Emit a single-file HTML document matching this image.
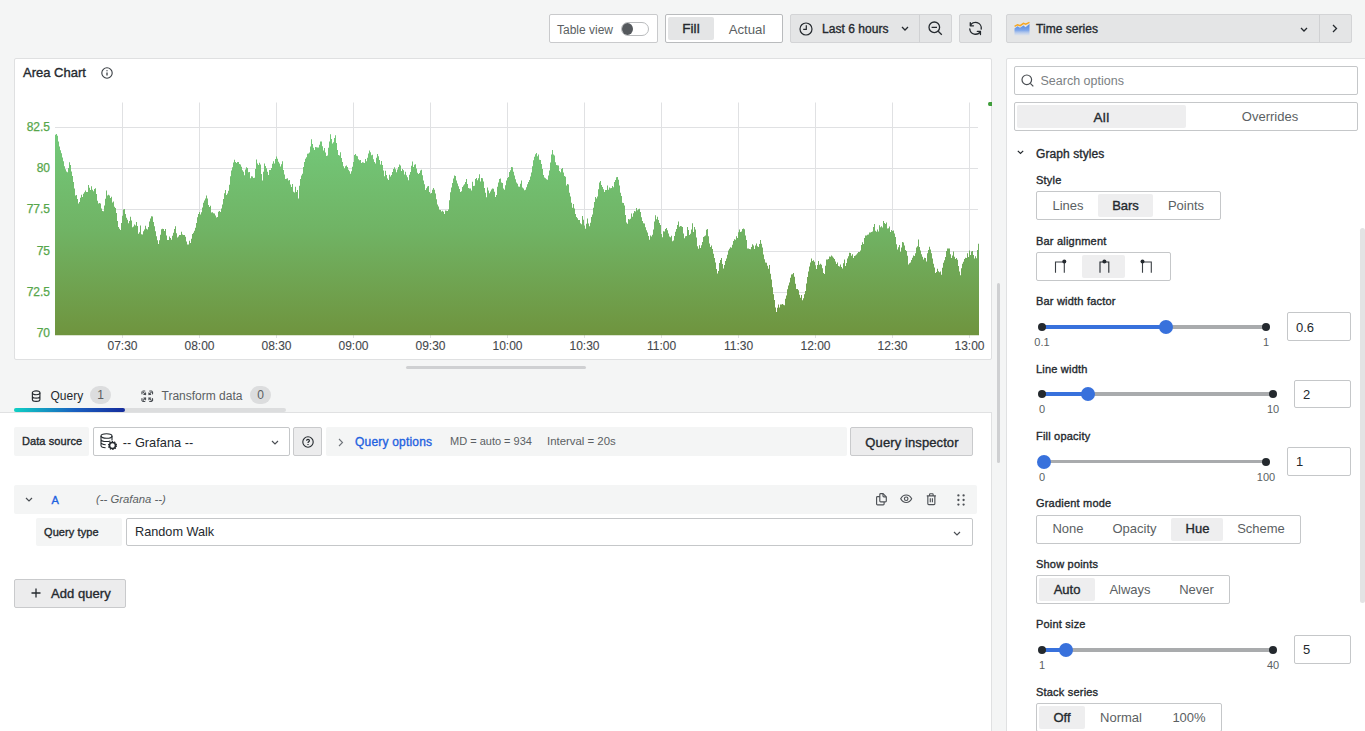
<!DOCTYPE html>
<html lang="en">
<head>
<meta charset="utf-8">
<title>Area Chart - Edit panel</title>
<style>
*{box-sizing:border-box;margin:0;padding:0}
html,body{width:1365px;height:731px;overflow:hidden}
body{background:#f4f5f5;font-family:"Liberation Sans",sans-serif;font-size:12.5px;color:#24292e;position:relative}
.abs{position:absolute}
.t{position:absolute;white-space:nowrap;line-height:1}
.c{transform:translateX(-50%)}
.btn{position:absolute;background:#e4e5e6;border:1px solid #d3d4d6;border-radius:2px}
.box{position:absolute;background:#fff;border:1px solid #c5c7c9;border-radius:2px}
.act{position:absolute;background:#eeeeef;border-radius:2px}
.lbl{position:absolute;white-space:nowrap;line-height:1;font-size:11px;letter-spacing:.2px;-webkit-text-stroke:.35px currentColor;color:#24292e}
.md{-webkit-text-stroke:.35px currentColor}
.sec{color:#5b5f63}
.track{position:absolute;height:3.5px;background:#a9abad;border-radius:2px}
.fill{position:absolute;height:3.5px;background:#3871dc;border-radius:2px}
.dot{position:absolute;width:8px;height:8px;border-radius:50%;background:#24292e}
.hnd{position:absolute;width:14px;height:14px;border-radius:50%;background:#3871dc}
.mk{position:absolute;white-space:nowrap;line-height:1;font-size:11px;color:#5b5f63;transform:translateX(-50%)}
svg{position:absolute;overflow:visible}
</style>
</head>
<body>

<!-- ===== top toolbar ===== -->
<div class="box" style="left:549px;top:14px;width:109px;height:29px;border-color:#c9cacc"></div>
<div class="t sec" style="left:557px;top:23.5px;font-size:12px">Table view</div>
<div class="abs" style="left:621px;top:22px;width:28px;height:14px;border-radius:7px;background:#fff;border:1px solid #b9bbbd"></div>
<div class="abs" style="left:622px;top:23px;width:11px;height:12px;border-radius:50%;background:#55595d"></div>

<div class="box" style="left:665px;top:14px;width:118px;height:29px;border-color:#b9bbbd"></div>
<div class="act" style="left:668px;top:17px;width:46px;height:23px;background:#e4e5e6"></div>
<div class="t c md" style="left:691px;top:21.5px;font-size:13.5px;letter-spacing:.1px">Fill</div>
<div class="t c sec" style="left:747px;top:22.5px;font-size:13.2px">Actual</div>

<div class="btn" style="left:790px;top:14px;width:162px;height:29px"></div>
<div class="abs" style="left:919px;top:15px;width:1px;height:27px;background:#d0d1d3"></div>
<svg style="left:799px;top:22px" width="14" height="14" viewBox="0 0 14 14" fill="none" stroke="#24292e" stroke-width="1.2"><circle cx="7" cy="7" r="6"/><path d="M7.3 3.2V7.3H4.2"/></svg>
<div class="t md" style="left:822px;top:23px;font-size:12px;letter-spacing:.05px">Last 6 hours</div>
<svg style="left:901px;top:26px" width="8" height="6" viewBox="0 0 8 6" fill="none" stroke="#24292e" stroke-width="1.3"><path d="M1 1l3 3 3-3"/></svg>
<svg style="left:928px;top:21px" width="15" height="15" viewBox="0 0 15 15" fill="none" stroke="#24292e" stroke-width="1.3"><circle cx="6.3" cy="6.3" r="5.3"/><path d="M3.6 6.3h5.4M10.2 10.2l3.6 3.6"/></svg>

<div class="btn" style="left:959px;top:14px;width:33px;height:29px"></div>
<svg style="left:967.5px;top:21.3px" width="15" height="15" viewBox="0 0 17 17" fill="none" stroke="#24292e" stroke-width="1.500" stroke-linecap="round" stroke-linejoin="round"><path d="M2.600 5.500A6.500 6.500 0 0 1 14.980 9.070M2.600 1.900V5.500H6.200"/><path d="M2.030 9.070A6.500 6.500 0 0 0 14.100 11.800M10.600 11.800H14.100V15.400"/></svg>

<div class="btn" style="left:1006px;top:14px;width:346px;height:29px"></div>
<div class="abs" style="left:1319px;top:15px;width:1px;height:27px;background:#d0d1d3"></div>
<svg style="left:1013.5px;top:21.5px" width="16" height="13.5" viewBox="0 0 16 13.5"><defs><linearGradient id="tsg" x1="0" y1="0" x2="0" y2="1"><stop offset="0" stop-color="#4f86e0"/><stop offset=".55" stop-color="#7ea6ea"/><stop offset="1" stop-color="#c9d8f3" stop-opacity=".3"/></linearGradient></defs><path d="M.5 13.500V6.500l3-2.300 2.500 1.500 3.500-2.200 2 1.700 4-3.200v11.500z" fill="url(#tsg)"/><path d="M.6 4.300l2.900-1.600 2.700.9L9.500 1.300l2.200.8L15.500.4" fill="none" stroke="#f5a623" stroke-width="1.500"/></svg>
<div class="t md" style="left:1036px;top:23px;font-size:12px;letter-spacing:.05px">Time series</div>
<svg style="left:1300.3px;top:26.5px" width="8" height="6" viewBox="0 0 8 6" fill="none" stroke="#24292e" stroke-width="1.3"><path d="M1 1l3 3 3-3"/></svg>
<svg style="left:1332px;top:24px" width="6" height="9" viewBox="0 0 6 9" fill="none" stroke="#24292e" stroke-width="1.3"><path d="M1 1l3.5 3.5L1 8"/></svg>

<!-- ===== chart panel ===== -->
<div class="abs" style="left:14px;top:58px;width:978px;height:302px;background:#fff;border:1px solid #dfe0e1;border-radius:2px"></div>
<div class="t md" style="left:23px;top:66.2px;font-size:13px">Area Chart</div>
<svg style="left:101px;top:67px" width="12" height="12" viewBox="0 0 12 12" fill="none" stroke="#3a3f44" stroke-width="1.1"><circle cx="6" cy="6" r="5.2"/><path d="M6 5.4v3.2M6 3.2v1" stroke-width="1.3"/></svg>
<svg style="left:0;top:0" width="1000" height="360" viewBox="0 0 1000 360" font-family="Liberation Sans, sans-serif" font-size="12">
<defs><linearGradient id="hue" x1="0" y1="128" x2="0" y2="335" gradientUnits="userSpaceOnUse"><stop offset="0" stop-color="#73ca7b"/><stop offset=".5" stop-color="#70b364"/><stop offset="1" stop-color="#6f943e"/></linearGradient></defs>
<g stroke="#e0e1e3" stroke-width="1"><path d="M122.5 102.5V338"/><path d="M199.5 102.5V338"/><path d="M276.5 102.5V338"/><path d="M353.5 102.5V338"/><path d="M430.5 102.5V338"/><path d="M507.5 102.5V338"/><path d="M584.5 102.5V338"/><path d="M661.5 102.5V338"/><path d="M738.5 102.5V338"/><path d="M815.5 102.5V338"/><path d="M892.5 102.5V338"/><path d="M969.5 102.5V338"/><path d="M55 127.5H978"/><path d="M55 168.5H978"/><path d="M55 209.5H978"/><path d="M55 251.5H978"/><path d="M55 292.5H978"/><path d="M55 333.5H978"/></g>
<path d="M55 335.3V134.8h1V133.9h1V135.7h1V141.4h1V146.6h1V150.3h1V153.2h1V157.6h1V161.2h1V166.3h1V169.2h1V171.5h1V172.2h1V167.9h1V162.3h1V165.0h1V171.6h1V176.0h1V182.1h1V188.4h1V195.6h1V195.0h1V198.9h1V203.5h1V201.9h1V197.7h1V194.8h1V197.1h1V193.7h1V192.2h1V190.4h1V191.9h1V191.9h1V185.1h1V187.7h1V190.0h1V186.2h1V189.8h1V191.3h1V188.9h1V188.3h1V194.0h1V200.7h1V203.6h1V203.0h1V203.4h1V208.5h1V211.1h1V211.2h1V205.4h1V198.8h1V190.6h1V195.5h1V194.7h1V195.6h1V197.9h1V196.8h1V202.6h1V201.5h1V206.8h1V208.0h1V213.0h1V220.9h1V226.9h1V228.8h1V230.1h1V222.9h1V215.7h1V209.4h1V209.1h1V214.0h1V217.7h1V219.8h1V223.3h1V221.0h1V216.8h1V220.5h1V227.2h1V226.4h1V224.6h1V225.5h1V222.0h1V225.9h1V233.7h1V232.3h1V225.6h1V234.2h1V234.4h1V231.3h1V229.4h1V225.7h1V228.7h1V229.5h1V227.0h1V221.6h1V218.6h1V216.3h1V216.6h1V222.1h1V226.2h1V231.2h1V236.3h1V240.3h1V244.1h1V240.3h1V234.7h1V229.3h1V228.8h1V229.0h1V230.9h1V229.1h1V235.6h1V240.0h1V240.0h1V236.4h1V238.1h1V239.8h1V235.8h1V232.8h1V229.1h1V226.3h1V233.2h1V237.6h1V236.4h1V235.0h1V235.1h1V231.8h1V234.6h1V235.1h1V234.9h1V236.7h1V241.5h1V244.6h1V244.4h1V240.8h1V243.1h1V238.8h1V233.9h1V232.8h1V230.7h1V227.7h1V223.0h1V217.3h1V214.0h1V212.1h1V214.6h1V212.3h1V207.4h1V202.8h1V200.6h1V198.5h1V195.5h1V198.6h1V205.0h1V207.1h1V205.7h1V212.6h1V212.3h1V213.2h1V213.6h1V215.6h1V217.5h1V217.0h1V211.8h1V211.0h1V211.9h1V208.5h1V204.6h1V199.1h1V193.2h1V189.9h1V195.1h1V193.6h1V190.7h1V184.7h1V176.3h1V170.4h1V167.2h1V162.5h1V159.8h1V161.9h1V163.0h1V162.1h1V162.0h1V163.9h1V164.4h1V166.7h1V170.2h1V171.8h1V175.2h1V169.5h1V167.2h1V168.1h1V172.3h1V172.0h1V178.3h1V176.3h1V176.6h1V178.1h1V177.7h1V169.1h1V159.4h1V163.6h1V165.0h1V162.8h1V164.5h1V173.9h1V180.6h1V171.8h1V163.6h1V166.0h1V168.3h1V171.8h1V175.1h1V169.9h1V169.9h1V167.9h1V163.7h1V161.3h1V163.6h1V159.1h1V156.6h1V158.8h1V161.8h1V163.4h1V166.6h1V164.2h1V161.3h1V170.1h1V174.5h1V179.0h1V178.7h1V178.2h1V180.6h1V179.9h1V184.4h1V187.0h1V184.1h1V191.7h1V192.4h1V186.7h1V192.0h1V190.1h1V198.5h1V185.8h1V179.0h1V175.5h1V173.7h1V167.0h1V161.9h1V158.7h1V157.3h1V153.7h1V153.4h1V152.4h1V146.6h1V139.2h1V143.9h1V147.8h1V150.0h1V146.9h1V147.2h1V147.5h1V147.5h1V144.7h1V141.5h1V141.5h1V146.3h1V150.4h1V148.0h1V152.6h1V156.1h1V155.5h1V147.8h1V141.4h1V134.2h1V138.9h1V143.6h1V142.3h1V137.9h1V135.3h1V142.9h1V150.0h1V155.1h1V155.4h1V152.3h1V158.1h1V162.1h1V166.2h1V168.2h1V166.3h1V165.5h1V167.0h1V169.8h1V171.2h1V173.7h1V171.3h1V166.8h1V161.9h1V155.1h1V154.0h1V155.7h1V156.2h1V159.2h1V160.3h1V160.1h1V163.1h1V162.3h1V162.4h1V163.1h1V159.0h1V161.2h1V157.7h1V153.5h1V150.6h1V152.2h1V155.2h1V154.8h1V159.2h1V162.1h1V163.5h1V157.7h1V153.9h1V156.2h1V159.9h1V164.6h1V160.9h1V165.0h1V170.5h1V176.2h1V170.8h1V175.0h1V178.4h1V180.1h1V174.8h1V176.6h1V175.0h1V172.0h1V169.0h1V167.3h1V169.2h1V172.3h1V169.6h1V167.0h1V164.6h1V165.6h1V171.0h1V169.0h1V170.3h1V174.4h1V171.7h1V175.2h1V177.3h1V180.2h1V174.7h1V171.9h1V165.7h1V161.6h1V167.0h1V164.7h1V164.2h1V168.5h1V172.8h1V174.0h1V173.0h1V170.6h1V169.7h1V175.2h1V180.4h1V184.2h1V190.0h1V188.3h1V186.4h1V186.0h1V192.0h1V193.6h1V193.0h1V189.7h1V188.1h1V189.7h1V193.4h1V199.3h1V204.4h1V206.5h1V209.7h1V209.9h1V211.4h1V210.8h1V211.7h1V214.1h1V210.4h1V210.7h1V210.9h1V209.5h1V200.3h1V192.2h1V187.5h1V183.1h1V178.6h1V175.5h1V176.1h1V180.6h1V183.5h1V186.2h1V188.9h1V191.9h1V191.2h1V186.9h1V185.5h1V184.2h1V182.1h1V178.9h1V184.1h1V188.0h1V188.6h1V188.4h1V190.5h1V181.7h1V186.0h1V185.8h1V179.1h1V178.0h1V180.2h1V178.2h1V174.2h1V181.5h1V178.1h1V178.2h1V181.6h1V188.1h1V192.8h1V197.2h1V187.4h1V190.6h1V193.3h1V191.5h1V189.4h1V188.6h1V188.7h1V191.7h1V197.0h1V195.1h1V186.8h1V182.4h1V179.0h1V178.6h1V182.5h1V183.0h1V188.6h1V189.7h1V185.2h1V180.5h1V178.1h1V176.9h1V171.9h1V170.2h1V167.1h1V167.2h1V171.8h1V175.4h1V179.2h1V182.4h1V183.8h1V186.6h1V186.8h1V183.7h1V180.5h1V187.4h1V188.4h1V190.3h1V189.7h1V187.3h1V184.2h1V182.0h1V180.1h1V176.6h1V172.4h1V166.2h1V160.3h1V156.8h1V154.2h1V152.9h1V156.3h1V154.6h1V159.8h1V160.0h1V164.1h1V168.9h1V175.0h1V177.5h1V178.2h1V179.3h1V179.8h1V175.5h1V170.6h1V162.6h1V154.6h1V150.0h1V154.4h1V155.4h1V162.2h1V165.1h1V165.2h1V165.5h1V171.0h1V172.3h1V168.9h1V168.1h1V172.5h1V175.9h1V176.7h1V185.6h1V184.1h1V184.6h1V192.7h1V196.4h1V202.8h1V207.8h1V204.0h1V208.5h1V214.0h1V217.1h1V218.3h1V220.1h1V220.1h1V223.2h1V224.3h1V216.1h1V219.7h1V225.4h1V228.8h1V223.8h1V218.5h1V223.4h1V226.3h1V222.7h1V217.0h1V214.4h1V207.8h1V202.0h1V196.9h1V198.4h1V196.4h1V189.2h1V182.5h1V180.9h1V185.0h1V186.9h1V189.2h1V192.0h1V189.9h1V189.9h1V185.5h1V189.7h1V187.6h1V188.2h1V188.0h1V186.1h1V187.3h1V181.9h1V180.0h1V177.3h1V177.0h1V179.7h1V185.6h1V192.8h1V196.0h1V202.7h1V202.9h1V205.5h1V214.9h1V222.5h1V223.7h1V219.0h1V219.6h1V218.8h1V213.4h1V216.8h1V213.3h1V211.1h1V211.5h1V208.1h1V210.3h1V209.3h1V208.8h1V212.0h1V217.2h1V221.1h1V223.2h1V223.4h1V227.3h1V230.2h1V232.6h1V235.9h1V239.7h1V235.4h1V236.5h1V234.8h1V229.4h1V221.4h1V215.3h1V219.3h1V216.8h1V220.1h1V223.0h1V225.1h1V233.9h1V237.3h1V231.3h1V231.5h1V229.1h1V228.0h1V230.2h1V233.4h1V236.5h1V237.3h1V235.7h1V241.2h1V240.4h1V236.0h1V231.7h1V229.0h1V224.9h1V221.4h1V226.8h1V225.9h1V226.3h1V227.0h1V233.5h1V238.3h1V236.2h1V235.9h1V226.9h1V230.1h1V234.9h1V233.8h1V229.6h1V223.3h1V232.0h1V226.9h1V229.5h1V237.6h1V246.2h1V248.7h1V245.2h1V247.9h1V245.2h1V242.1h1V237.1h1V236.3h1V235.4h1V229.7h1V228.9h1V236.3h1V243.4h1V247.1h1V245.6h1V249.0h1V253.7h1V258.1h1V262.4h1V269.1h1V273.4h1V271.1h1V263.1h1V260.0h1V258.1h1V264.1h1V268.4h1V265.1h1V260.9h1V258.4h1V254.7h1V250.4h1V248.8h1V247.2h1V247.7h1V244.7h1V240.9h1V239.3h1V239.8h1V236.2h1V237.9h1V232.3h1V229.6h1V231.9h1V231.6h1V229.1h1V228.6h1V229.2h1V235.4h1V239.9h1V248.4h1V248.6h1V248.9h1V249.3h1V247.1h1V244.3h1V245.6h1V249.1h1V245.6h1V243.5h1V246.3h1V247.1h1V243.9h1V240.1h1V243.8h1V247.4h1V254.6h1V259.3h1V262.6h1V262.8h1V265.8h1V268.8h1V265.1h1V273.7h1V279.5h1V287.3h1V294.3h1V300.1h1V307.4h1V312.0h1V307.7h1V304.6h1V307.6h1V304.5h1V304.6h1V304.0h1V304.8h1V305.3h1V298.8h1V295.4h1V289.3h1V285.4h1V282.4h1V277.8h1V274.5h1V274.2h1V273.1h1V276.8h1V283.8h1V289.1h1V289.1h1V290.2h1V294.8h1V297.8h1V295.1h1V300.2h1V298.3h1V294.2h1V291.0h1V283.4h1V277.0h1V271.5h1V266.6h1V262.6h1V258.5h1V261.0h1V260.3h1V261.8h1V265.3h1V269.0h1V265.0h1V260.9h1V264.8h1V263.8h1V264.7h1V268.3h1V273.1h1V274.0h1V265.8h1V259.4h1V259.5h1V259.1h1V256.6h1V256.8h1V255.5h1V256.6h1V257.7h1V259.1h1V261.5h1V263.9h1V262.5h1V266.0h1V266.4h1V264.5h1V267.0h1V268.5h1V263.3h1V259.5h1V266.0h1V262.9h1V258.6h1V256.3h1V252.7h1V253.0h1V255.7h1V254.2h1V257.9h1V256.1h1V255.4h1V254.5h1V253.3h1V252.0h1V251.9h1V250.4h1V244.9h1V242.2h1V244.0h1V237.9h1V235.6h1V235.6h1V234.8h1V234.5h1V232.6h1V232.5h1V232.0h1V231.6h1V227.0h1V224.0h1V230.7h1V231.7h1V229.6h1V231.5h1V225.3h1V227.2h1V226.3h1V227.4h1V220.9h1V223.1h1V224.0h1V222.5h1V228.6h1V228.2h1V226.5h1V231.9h1V229.9h1V231.0h1V230.5h1V233.4h1V236.9h1V244.2h1V249.6h1V247.3h1V245.0h1V251.8h1V247.6h1V242.1h1V242.5h1V245.5h1V250.0h1V251.1h1V255.8h1V264.4h1V263.2h1V262.4h1V260.0h1V257.8h1V255.6h1V256.0h1V253.2h1V247.5h1V246.2h1V239.4h1V247.1h1V250.5h1V254.3h1V256.8h1V259.5h1V257.8h1V257.9h1V261.6h1V253.2h1V250.1h1V246.8h1V249.4h1V253.3h1V258.4h1V263.8h1V267.4h1V272.9h1V271.9h1V268.8h1V271.2h1V272.3h1V271.4h1V274.7h1V267.8h1V262.8h1V260.3h1V257.0h1V251.0h1V248.5h1V248.6h1V248.4h1V254.3h1V257.9h1V255.5h1V251.6h1V256.7h1V259.0h1V258.1h1V259.7h1V266.0h1V271.6h1V275.3h1V268.3h1V263.7h1V261.8h1V258.9h1V257.8h1V257.9h1V253.3h1V257.0h1V250.4h1V255.0h1V251.6h1V251.0h1V255.1h1V258.6h1V256.2h1V258.3h1V249.9h1V243.8h1V335.3Z" fill="url(#hue)"/>
<g fill="#56a64b" stroke="#56a64b" stroke-width=".25" text-anchor="end"><text x="50" y="130.8">82.5</text><text x="50" y="171.8">80</text><text x="50" y="212.8">77.5</text><text x="50" y="254.8">75</text><text x="50" y="295.8">72.5</text><text x="50" y="336.8">70</text></g>
<g fill="#44484c" stroke="#44484c" stroke-width=".1" text-anchor="middle"><text x="122.5" y="350.4">07:30</text><text x="199.5" y="350.4">08:00</text><text x="276.5" y="350.4">08:30</text><text x="353.5" y="350.4">09:00</text><text x="430.5" y="350.4">09:30</text><text x="507.5" y="350.4">10:00</text><text x="584.5" y="350.4">10:30</text><text x="661.5" y="350.4">11:00</text><text x="738.5" y="350.4">11:30</text><text x="815.5" y="350.4">12:00</text><text x="892.5" y="350.4">12:30</text><text x="969.5" y="350.4">13:00</text></g>
<path d="M992 102h-2.500a1.500 2 0 0 0 0 4h2.500z" fill="#3f9e3b"/>
</svg>

<!-- splitters -->
<div class="abs" style="left:406px;top:365.500px;width:180px;height:3px;border-radius:2px;background:#cfd0d2"></div>
<div class="abs" style="left:997px;top:283px;width:3px;height:180px;border-radius:2px;background:#cfd0d2"></div>

<!-- ===== tabs ===== -->
<svg style="left:31px;top:390px" width="10.3" height="12.3" viewBox="0 0 11 14" fill="none" stroke="#24292e" stroke-width="1.3"><ellipse cx="5.5" cy="3.2" rx="4.3" ry="2.2"/><path d="M1.2 3.2v7.6c0 1.2 1.9 2.2 4.3 2.2s4.3-1 4.3-2.2V3.2M1.2 7c0 1.2 1.9 2.2 4.3 2.2S9.800 8.200 9.800 7"/></svg>
<div class="t" style="left:50.5px;top:390px;font-size:12px">Query</div>
<div class="abs" style="left:90px;top:386px;width:21px;height:18px;border-radius:9px;background:#dcddde"></div>
<div class="t c sec" style="left:100.500px;top:389px;font-size:12px">1</div>
<svg style="left:141px;top:389.5px" width="12.5" height="12.5" viewBox="0 0 13 13" fill="none" stroke="#4a4e53" stroke-width="1.200" stroke-linecap="round"><path d="M1 4V1.800C1 1.300 1.300 1 1.800 1H4M9 1h2.200c.5 0 .8.300.8.800V4M12 9v2.200c0 .5-.3.800-.8.800H9M4 12H1.800c-.5 0-.8-.3-.8-.8V9" stroke-dasharray="2.200 1.300"/><path d="M2.200 2.200l2.600 2.600M4.800 2.900v1.900H2.900M10.800 2.200L8.200 4.800M8.200 2.900v1.900h1.900M10.800 10.800L8.200 8.200M8.200 10.100V8.200h1.900M2.200 10.800l2.600-2.600M4.800 10.100V8.200H2.900" stroke-width="1.050"/></svg>
<div class="t sec" style="left:161.5px;top:390px;font-size:12px">Transform data</div>
<div class="abs" style="left:250px;top:386px;width:21px;height:18px;border-radius:9px;background:#dcddde"></div>
<div class="t c sec" style="left:260.500px;top:389px;font-size:12px">0</div>
<div class="abs" style="left:14px;top:408px;width:272px;height:4px;border-radius:2px;background:#dcddde"></div>
<div class="abs" style="left:14px;top:408px;width:111px;height:4px;border-radius:2px;background:linear-gradient(90deg,#0fd0c4 0%,#1a5fc0 55%,#152c9c 100%)"></div>

<!-- ===== query area ===== -->
<div class="abs" style="left:0;top:412px;width:992px;height:320px;background:#fff;border-top:1px solid #e0e1e2;border-right:1px solid #e0e1e2"></div>

<div class="abs" style="left:14px;top:427px;width:75px;height:29px;background:#f4f5f5;border-radius:2px"></div>
<div class="lbl" style="left:22px;top:436px;letter-spacing:.08px">Data source</div>
<div class="box" style="left:93px;top:427px;width:197px;height:29px"></div>
<svg style="left:100px;top:433px" width="18" height="17" viewBox="0 0 18 17" fill="none" stroke="#24292e" stroke-width="1.1"><ellipse cx="6.500" cy="3" rx="5.500" ry="2.300"/><path d="M1 3v9.500c0 1.100 2 2.100 4.600 2.300M12 3v4.500M1 6.200c0 1.200 2.400 2.300 5.500 2.300 1.500 0 2.800-.2 3.800-.6M1 9.400c0 1.100 2 2 4.700 2.300"/><circle cx="12.500" cy="12.500" r="3" stroke-width="1.600"/><circle cx="12.500" cy="12.500" r="3.900" stroke-dasharray="1.300 1.150" stroke-width="1.300"/></svg>
<div class="t" style="left:122.8px;top:436.5px;font-size:12.8px">-- Grafana --</div>
<svg style="left:271px;top:439.5px" width="8" height="6" viewBox="0 0 8 6" fill="none" stroke="#4a4e53" stroke-width="1.150"><path d="M1 1l3 3 3-3"/></svg>
<div class="btn" style="left:293px;top:427px;width:29px;height:29px;background:#ececed;border-color:#c9cacc"></div>
<svg style="left:302px;top:436px" width="12" height="12" viewBox="0 0 12 12" fill="none" stroke="#24292e" stroke-width="1.100"><circle cx="6" cy="6" r="5.200"/><path d="M4.600 4.800c0-.9.600-1.400 1.400-1.400s1.400.5 1.400 1.300c0 1.100-1.400 1.100-1.400 2.200M6 8v1" stroke-width="1.200"/></svg>

<div class="abs" style="left:326px;top:427px;width:521px;height:29px;background:#f4f5f5;border-radius:2px"></div>
<svg style="left:337.5px;top:437.5px" width="6" height="9" viewBox="0 0 6 9" fill="none" stroke="#70747a" stroke-width="1.100"><path d="M1 1l3.500 3.500L1 8"/></svg>
<div class="lbl" style="left:355px;top:435.7px;font-size:12px;letter-spacing:.2px;color:#1f62e0">Query options</div>
<div class="t sec" style="left:450px;top:436px;font-size:11px">MD = auto = 934</div>
<div class="t sec" style="left:547px;top:436px;font-size:11.4px">Interval = 20s</div>

<div class="btn" style="left:850px;top:427px;width:123px;height:29px;background:#ececed;border-color:#c9cacc"></div>
<div class="t c md" style="left:912px;top:435.6px;font-size:13px;letter-spacing:.1px">Query inspector</div>

<!-- query row A -->
<div class="abs" style="left:14px;top:485px;width:963px;height:29px;background:#f4f5f5;border-radius:2px"></div>
<svg style="left:25px;top:497px" width="8" height="6" viewBox="0 0 8 6" fill="none" stroke="#4a4e53" stroke-width="1.200"><path d="M1 1l3 3 3-3"/></svg>
<div class="lbl" style="left:51.500px;top:495px;font-size:11px;letter-spacing:0;color:#1f62e0">A</div>
<div class="t sec" style="left:96px;top:494px;font-size:11.3px;font-style:italic">(-- Grafana --)</div>

<svg style="left:875.8px;top:492.8px" width="11" height="12.5" viewBox="0 0 11 12.5" fill="none" stroke="#4d5156" stroke-width="1.150" stroke-linejoin="round"><path d="M3.800 1.500c0-.5.400-.9.900-.9h2.400l3.200 3.200v4.200c0 .5-.4.900-.9.900H4.700c-.5 0-.9-.4-.9-.9z"/><path d="M7 .8v2.100c0 .5.400.9.900.9h2.200"/><path d="M3.800 3.600H1.500c-.5 0-.9.400-.9.900v6.500c0 .5.400.9.900.9h5.700c.5 0 .9-.4.900-.9V8.900"/></svg>
<svg style="left:900px;top:494.3px" width="12.4" height="9.500" viewBox="0 0 14 10" fill="none" stroke="#4d5156" stroke-width="1.300"><path d="M.8 5C2.200 2.300 4.400.8 7 .8s4.800 1.500 6.200 4.200C11.800 7.700 9.600 9.200 7 9.200S2.200 7.700.8 5z"/><circle cx="7" cy="5" r="2"/></svg>
<svg style="left:926px;top:493px" width="10.700" height="12.300" viewBox="0 0 12 14" fill="none" stroke="#4d5156" stroke-width="1.300"><path d="M.8 3.300h10.400M4 3.300V1.500c0-.4.300-.7.700-.7h2.600c.4 0 .7.300.7.700v1.800M2 3.300v8.900c0 .6.400 1 1 1h6c.6 0 1-.4 1-1V3.300M4.800 5.900v4.500M7.200 5.900v4.500"/></svg>
<svg style="left:957.2px;top:494.200px" width="8" height="12" viewBox="0 0 8 12" fill="#4d5156"><circle cx="1.400" cy="1.400" r="1.150"/><circle cx="6.600" cy="1.400" r="1.150"/><circle cx="1.400" cy="6" r="1.150"/><circle cx="6.600" cy="6" r="1.150"/><circle cx="1.400" cy="10.600" r="1.150"/><circle cx="6.600" cy="10.600" r="1.150"/></svg>

<div class="abs" style="left:36px;top:518px;width:86px;height:28px;background:#f4f5f5;border-radius:2px"></div>
<div class="lbl" style="left:44px;top:527px;letter-spacing:.1px">Query type</div>
<div class="box" style="left:126px;top:518px;width:847px;height:28px"></div>
<div class="t" style="left:135px;top:525.7px;font-size:12.7px">Random Walk</div>
<svg style="left:953px;top:530.5px" width="8" height="6" viewBox="0 0 8 6" fill="none" stroke="#4a4e53" stroke-width="1.150"><path d="M1 1l3 3 3-3"/></svg>

<div class="btn" style="left:14px;top:579px;width:112px;height:29px;background:#ececed;border-color:#c9cacc"></div>
<svg style="left:31px;top:588px" width="10" height="10" viewBox="0 0 10 10" fill="none" stroke="#24292e" stroke-width="1.300"><path d="M5 .5v9M.5 5h9"/></svg>
<div class="t md" style="left:51px;top:586.7px;font-size:13px;letter-spacing:.05px">Add query</div>

<!-- ===== options pane ===== -->
<div class="abs" style="left:1006px;top:58px;width:360px;height:680px;background:#fff;border:1px solid #e0e1e2;border-radius:2px 0 0 0"></div>
<div class="abs" style="left:1360px;top:228px;width:5px;height:375px;border-radius:3px;background:#e3e3e4"></div>

<div class="box" style="left:1014px;top:66px;width:344px;height:29px"></div>
<svg style="left:1021px;top:74px" width="13" height="13" viewBox="0 0 13 13" fill="none" stroke="#4a4e53" stroke-width="1.200"><circle cx="5.800" cy="5.800" r="4.800"/><path d="M9.300 9.300l3 3"/></svg>
<div class="t" style="left:1040.5px;top:74.8px;font-size:12.500px;color:#7b7f83">Search options</div>

<div class="box" style="left:1014px;top:102px;width:344px;height:29px"></div>
<div class="act" style="left:1017px;top:105px;width:169px;height:23px"></div>
<div class="t c md" style="left:1101.5px;top:110.5px;font-size:13.5px;letter-spacing:.3px">All</div>
<div class="t c sec" style="left:1270px;top:110px;font-size:13px">Overrides</div>

<svg style="left:1017px;top:150px" width="7" height="5" viewBox="0 0 7 5" fill="none" stroke="#24292e" stroke-width="1.200"><path d="M.8.800l2.700 2.700L6.200.8"/></svg>
<div class="lbl" style="left:1036px;top:147.5px;font-size:12px;letter-spacing:.08px">Graph styles</div>

<div class="lbl" style="left:1036px;top:175px">Style</div>
<div class="box" style="left:1036px;top:191px;width:185px;height:29px"></div>
<div class="act" style="left:1098px;top:194px;width:55px;height:23px"></div>
<div class="t c sec" style="left:1068px;top:199px;font-size:13px">Lines</div>
<div class="t c md" style="left:1125.500px;top:199px;font-size:13px">Bars</div>
<div class="t c sec" style="left:1186px;top:199px;font-size:13px">Points</div>

<div class="lbl" style="left:1036px;top:236px">Bar alignment</div>
<div class="box" style="left:1036px;top:252px;width:135px;height:29px"></div>
<div class="act" style="left:1082px;top:255px;width:43px;height:23px"></div>
<svg style="left:1054px;top:258.600px" width="14" height="15" viewBox="0 0 14 15" fill="none" stroke="#3a3f44" stroke-width="1.100"><path d="M1.500 13.700V3h8.800V13.700"/><circle cx="10.300" cy="2.500" r="2" fill="#24292e" stroke="none"/></svg>
<svg style="left:1098px;top:258.600px" width="14" height="15" viewBox="0 0 14 15" fill="none" stroke="#24292e" stroke-width="1.100"><path d="M2 13.700V3h8.800V13.700"/><circle cx="6.400" cy="2.500" r="2" fill="#24292e" stroke="none"/></svg>
<svg style="left:1140px;top:258.600px" width="14" height="15" viewBox="0 0 14 15" fill="none" stroke="#3a3f44" stroke-width="1.100"><path d="M2.500 13.700V3h8.800V13.700"/><circle cx="2.500" cy="2.500" r="2" fill="#24292e" stroke="none"/></svg>

<div class="lbl" style="left:1036px;top:296px">Bar width factor</div>
<div class="track" style="left:1041px;top:325px;width:225px"></div>
<div class="fill" style="left:1041px;top:325px;width:125px"></div>
<div class="dot" style="left:1037.500px;top:323px"></div>
<div class="dot" style="left:1262px;top:323px"></div>
<div class="hnd" style="left:1159px;top:320px"></div>
<div class="mk" style="left:1042px;top:337px">0.1</div>
<div class="mk" style="left:1266px;top:337px">1</div>
<div class="box" style="left:1287px;top:312px;width:64px;height:29px"></div>
<div class="t" style="left:1296px;top:321px;font-size:13px">0.6</div>

<div class="lbl" style="left:1036px;top:364px">Line width</div>
<div class="track" style="left:1041px;top:392px;width:232px"></div>
<div class="fill" style="left:1041px;top:392px;width:47px"></div>
<div class="dot" style="left:1037.500px;top:390px"></div>
<div class="dot" style="left:1269px;top:390px"></div>
<div class="hnd" style="left:1081px;top:387px"></div>
<div class="mk" style="left:1042px;top:404px">0</div>
<div class="mk" style="left:1273px;top:404px">10</div>
<div class="box" style="left:1294px;top:380px;width:57px;height:28px"></div>
<div class="t" style="left:1303px;top:388px;font-size:13px">2</div>

<div class="lbl" style="left:1036px;top:431px">Fill opacity</div>
<div class="track" style="left:1041px;top:459.500px;width:225px"></div>
<div class="dot" style="left:1262px;top:457.500px"></div>
<div class="hnd" style="left:1037px;top:454.500px"></div>
<div class="mk" style="left:1042px;top:472px">0</div>
<div class="mk" style="left:1266px;top:472px">100</div>
<div class="box" style="left:1287px;top:447px;width:64px;height:29px"></div>
<div class="t" style="left:1296px;top:455px;font-size:13px">1</div>

<div class="lbl" style="left:1036px;top:498px">Gradient mode</div>
<div class="box" style="left:1036px;top:515px;width:265px;height:29px"></div>
<div class="act" style="left:1171px;top:518px;width:52px;height:23px"></div>
<div class="t c sec" style="left:1068px;top:522.3px;font-size:13px">None</div>
<div class="t c sec" style="left:1134.500px;top:522.3px;font-size:13px">Opacity</div>
<div class="t c md" style="left:1197.500px;top:522.3px;font-size:13px">Hue</div>
<div class="t c sec" style="left:1261px;top:522.3px;font-size:13px">Scheme</div>

<div class="lbl" style="left:1036px;top:559px">Show points</div>
<div class="box" style="left:1036px;top:575px;width:194px;height:29px"></div>
<div class="act" style="left:1039px;top:578px;width:56px;height:23px"></div>
<div class="t c md" style="left:1067px;top:583px;font-size:13px">Auto</div>
<div class="t c sec" style="left:1130px;top:583px;font-size:13px">Always</div>
<div class="t c sec" style="left:1196.500px;top:583px;font-size:13px">Never</div>

<div class="lbl" style="left:1036px;top:619px">Point size</div>
<div class="track" style="left:1041px;top:648px;width:232px"></div>
<div class="fill" style="left:1041px;top:648px;width:25px"></div>
<div class="dot" style="left:1037.500px;top:646px"></div>
<div class="dot" style="left:1269px;top:646px"></div>
<div class="hnd" style="left:1058.500px;top:643px"></div>
<div class="mk" style="left:1042px;top:660px">1</div>
<div class="mk" style="left:1273px;top:660px">40</div>
<div class="box" style="left:1294px;top:635px;width:57px;height:29px"></div>
<div class="t" style="left:1303px;top:643px;font-size:13px">5</div>

<div class="lbl" style="left:1036px;top:687px">Stack series</div>
<div class="box" style="left:1036px;top:703px;width:186px;height:29px"></div>
<div class="act" style="left:1039px;top:706px;width:46px;height:23px"></div>
<div class="t c md" style="left:1062px;top:711px;font-size:13px">Off</div>
<div class="t c sec" style="left:1121px;top:711px;font-size:13px">Normal</div>
<div class="t c sec" style="left:1189px;top:711px;font-size:13px">100%</div>

</body>
</html>
